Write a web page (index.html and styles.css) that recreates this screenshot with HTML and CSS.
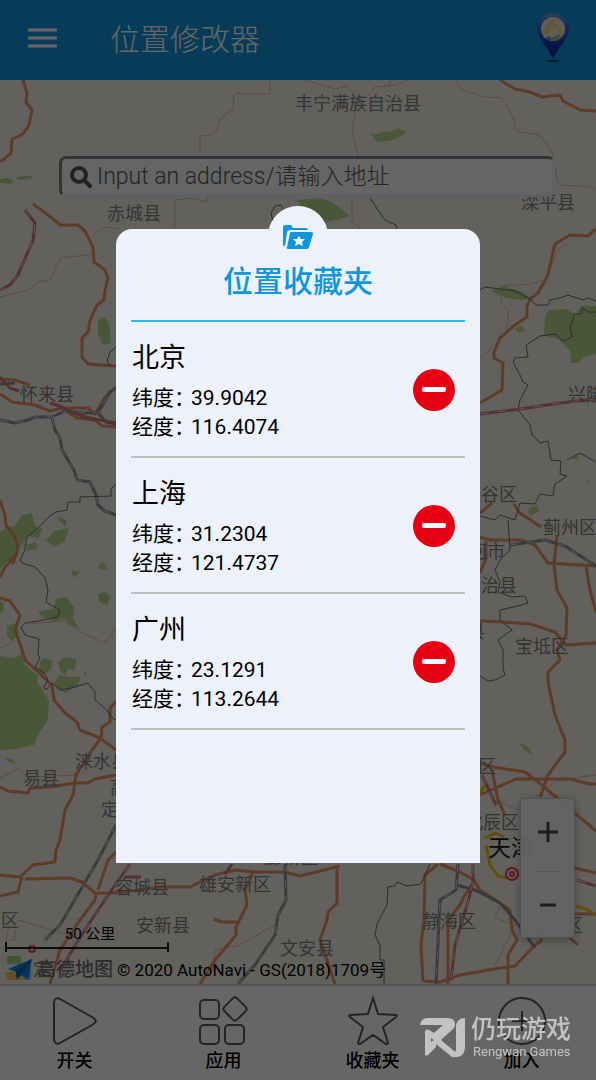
FILE: index.html
```html
<!DOCTYPE html>
<html lang="zh-CN">
<head>
    <meta charset="UTF-8">
    <meta name="viewport" content="width=device-width, initial-scale=1.0">
    <title>位置修改器</title>
    <link rel="stylesheet" href="styles.css">
</head>
<body>
    <header class="topbar">
        <button class="menu-btn" type="button" aria-label="菜单">
            <svg width="30" height="22" viewBox="0 0 30 22"><path d="M0 3h29M0 11h29M0 19h29" stroke="#fff" stroke-width="3"/></svg>
        </button>
        <h1>位置修改器</h1>
        <button class="pin-btn" type="button" aria-label="定位">
            <svg width="34" height="52" viewBox="0 0 34 52">
                <defs>
                    <linearGradient id="pin" x1="0" y1="0" x2="0" y2="1">
                        <stop offset="0" stop-color="#6ea0e6"/>
                        <stop offset=".35" stop-color="#325fd7"/>
                        <stop offset="1" stop-color="#1414a0"/>
                    </linearGradient>
                </defs>
                <ellipse cx="17" cy="49" rx="7" ry="1.5" fill="#08466e"/>
                <path d="M17 1C8 1 1 8 1 16c0 9 9 18 16 30 7-12 16-21 16-30C33 8 26 1 17 1z" fill="url(#pin)"/>
                <circle cx="17" cy="17" r="12" fill="#f0ebd7"/>
                <path d="M7 19l13-12M15 8l12 14M8 22l10-8" stroke="#f0dc8c" stroke-width="3"/>
                <path d="M15 26l8-4 3 2c-3 4-7 5-9 5z" fill="#a0c88c"/>
                <path d="M10 26l3-2 3 4-2 1z" fill="#3c96e6"/>
            </svg>
        </button>
    </header>

    <main class="map">
        <svg class="map-canvas" viewBox="0 80 596 904" preserveAspectRatio="xMidYMid slice">
            <!-- woods and parks -->
            <g class="green">
                <path d="M0 179l8-1 6 3-3 3-11-1zM16 178l6-2h11l-3 3-11 1zM370 133l7 1 8-3 5 1 8-4 9 4-8 5-10 4-12 1z"/>
                <path d="M297 200l21-2 12 3 7 5 13 10-10 3-13 3-18-3zM98 320l6-3 5 6 2 20-8 2-5-10z"/>
                <path d="M0 531l14-5 8-11 10-2 3 13 8 3-5 9-10-2-6 8-7 10-15 15zM58 516l8 4v7l-8-8zM46 541l8-10 15-3-4 13-11 6z"/>
                <path d="M26 545l10-3 1 7-10 2zM48 540h17l-8 4zM71 570l9 2-6 6zM98 566l5-5 5 9-9-1zM98 594l8-2 5 5-4 8-8-3z"/>
                <path d="M38 612l15-3 3-10 10-2 8 10-1 12 6 9-10-2-4-8-12 3-10-4zM7 626l9-3 3 10-6 8-6-4zM0 600l4 4-1 8-3 1z"/>
                <path d="M0 656l14 2 7-4 4 11 7 6 6 4-1 8 4 4 3 6 5 7-1 20-10 15-4 10-18 4-16 1z"/>
                <path d="M40 662l4-4 8 2-1 10-8 5-4-5zM58 662l8-5 11 2-3 12-6-3-2 8-6-6zM54 683l6-8 8 2 12 0-2 8-12 8-9-3zM83 673l4-1-2 5z"/>
                <path d="M5 758l8 1 3 5-8-2zM491 291l12-5 18 5 11 8-11 1-15-2zM515 329l5-4 6 5-7 3z"/>
                <path d="M545 316l4-6 17-1 10 6 5-9 15 0v48l-11 3-7 6-7 0-1-12-8-9-7-4-11-2z"/>
                <path d="M571 458l6-4 2 7zM528 509l9-4 2 6-9 5zM586 480l4 1-2 3zM519 743l10 4 4 8-8-4z"/>
            </g>
            <!-- county roads -->
            <g class="lane">
                <path d="M270 80v14h-31v-2l-5 3-1 14-13 10-3 11-5 5-12 1v21M207 197v5l-15-4-17 2v29M95 233l10-6 15 2"/>
                <path d="M0 297l28-7 10-8 12-2 10-22 35-4M305 80l30 9 12-3 3 4 8 8-6 32 7 30M366 98l9-11 20-2 13-5M390 80v6"/>
                <path d="M455 80l8 10 22 7 16 1 11 17 6 17 20 2 7 8 7 11 6 30 2 2 30 2 6 4M352 200v20l8 9M481 358l12-12M501 286l30-2 15-5 10-25 8-10M501 290v13l8 8-3 20"/>
                <path d="M30 624l40-4 12 13 23 10 11-15M0 648l15-7M0 778l18-9 10 8 50-2M18 920l30 9 26 8M9 926l-3 14h9v-10M213 970l2-20 25-5 35-20M496 800l22 10 40-30 38-5M495 965l20-40-20-7 5-12"/>
            </g>
            <!-- expressways -->
            <g class="road">
                <path d="M23 80l4 13-1 9 6 8-3 15-6 9-11 5-1 14-8 7-3 1M33 204l19 14 8 7h18l7 6 8 16 1 15 11 8 3 8-3 12-1 10-7 5-7 15-2 12-6 6v19l6 7 28 2"/>
                <path d="M0 379l15 1 15 5M0 394l12 8 23 3 15 6 12-3h26l7 6 10-17 11-10M62 408l15 10 18 2 7 6 14 1M0 500l5 15 1 10 9 12 3 13-6 10-7 7-5 10M18 550l-5 13-4-5"/>
                <path d="M0 598l10 3 10 14-5 15 7 20 3 10 13 12 14 13 2 15 11 13 12 9 3 8 20 8 16 12M116 702l-6 6v14l-8 5-1 11-9 12-16 25-3 20-8 15-5 30-4 10-1 12-22 3-13 12-22-2M22 877l-4 15-18 4M25 879l45-1 12 4 13 11h21l45-6 29 0 10-5 15-7 20-5 20 2h30l15 4 40-10"/>
                <path d="M96 893l-1 7-15 20-20 30-10 34M116 852l-8 8-10 30M0 787l8 4 20 2 2-5 20-1 25-4h13l7-4 21-4M253 872l-8 18 2 15-11 22v8l-21 25-15 24M214 919l8 3h18M337 868v35l-9 9-1 8-7 20 7 20 8 24"/>
                <path d="M438 864l-13 11-1 45-3 25 2 36 17 1 20-7 40-7 15-2 20-21 6-4v-16M440 864l20 8 14 8 6 10 20 13 10 7 2 20 5 10-9 15v29M474 882l-9 13-5 10-12 15v64"/>
                <path d="M500 80l15 9 15 3 12 5 18-2 3 6 17 9 16 1M596 229l-8 7-18-1-15 9-5 21-2 10-10 18-8 6-3 7v11l-12 8-15 13-6 14v6l9 5-1 27-22 13"/>
                <path d="M480 513l12-10M514 504l6 9 21 14M480 537l10 3h30l15 5 13 18 48 3M557 535l-3 30 3 25 10 18-1 27-9 15 3 10-12 12v10l7 33 10 25v12l-17 23-8 22M480 621l25 1 25 2 25 8 11 13 30-2M586 566l4 24 6 22"/>
                <path d="M480 795l36-16h54l20 5h6M480 763l13 4 32 5 18 14 53 45M492 770l6 30 7 15M575 868l21 5M575 914h21M570 938l8 7M486 541v17l-6 15"/>
            </g>
            <!-- railways and high-speed lines -->
            <g class="rail">
                <path d="M0 384l15-1M0 420l15 3 13-3 7-3h17l13-6 20 2h13l12-21 6-4M52 418l3 12 5 8 2 12 12 20 3 10 13 2 6 13 2 10 7 6 11 4M98 413l8 9 10 2"/>
                <path d="M116 825l-18 35-38 65-15 15M285 864l1 36-8 15-3 20-20 30-17 19M458 864l-2 26-16 10-4 84M456 885l19 5 25 13 15 17 20 28M510 545l35-5 20 6 31 20"/>
            </g>
            <g class="rail-dash">
                <path d="M0 420l15 3 13-3 7-3h17l13-6 20 2h13l12-21 6-4M52 418l3 12 5 8 2 12 12 20 3 10 13 2 6 13 2 10 7 6 11 4"/>
                <path d="M116 825l-18 35-38 65-15 15M285 864l1 36-8 15-3 20-20 30-17 19M458 864l-2 26-16 10-4 84M510 545l35-5 20 6 31 20"/>
            </g>
            <g class="fast">
                <path d="M25 210l10 13-2 17-15 35-8 10-10 5M0 377l10 11 9 3M50 403l10 3 12 6 13 5 31 6M130 864l-15 21-27 40-28 45M124 877h17M480 414l40-5 40-6 36-4M473 864v19l-6 22-12 40-4 35M232 864l-7 10M482 775l14 30M577 880l19 6"/>
            </g>
            <g class="fast-dash">
                <path d="M25 210l10 13-2 17-15 35-8 10-10 5M130 864l-15 21-27 40-28 45M480 414l40-5 40-6 36-4M473 864v19l-6 22-12 40-4 35M482 775l14 30M577 880l19 6"/>
            </g>
            <!-- district borders -->
            <g class="border">
                <path d="M116 484l-5 5v7l-31 1v5H68l-1 8-11 2-6 4-12 12-11 9-2 9 0 4-5 10 2 3 13 4 10 11 3 12-2 12 14 8-3 7-19 4-13 2-4 4 4 8 14 4-1 16 2 3-5 9 10 7 3 6-4 7 2 3 6-7 10 7 13-3 13-4 7 9v8l12 10 5 8 4 2M116 347l-6 5-3 9 3 5"/>
                <path d="M273 222l-2-9 4-7 6-1 2 4M370 198l10 15 5 7 11 5 1 4M480 290l5-3 30 4 15 8 6 6h12l2-5 10-2 8-3 15 5 5-2 8 3M596 312h-8l-6-4v6h-8l-1 6-3 7 2 10-9 4-8-7-15 2-14 9 2 12-13 1-2 4 7 13 3 7 5 3-8 15-2 10 12 15 2 10 8 8 8-2 3 19 10 1-1 13 7 2-12 8-2 12-13-2-5 10-15-1-5 17-15-5-5 5-15-4M596 462l-16-9-13 7M508 520l2 30-10 10-5 10 5 12-2 10 14 5 13-1 3 7-10 3-18 4v10l12 10-14 10 5 10v18l2 7-10 5-7 1-8-5"/>
                <path d="M430 864l-9 20-14 2-10-4-2 4-7 1-1 18-10 19-2 11 5 10v15h4v24"/>
            </g>
            <g class="subway">
                <path d="M485 785l-6 10M486 845l4 20 8 11 8 2M484 838l12-5 8 4M576 906l10 3 10 6"/>
            </g>
            <g class="capital">
                <circle cx="512" cy="874" r="6"/>
                <circle cx="512" cy="874" r="2"/>
                <circle cx="32" cy="949" r="3"/>
            </g>
            <g class="place">
                <text x="295" y="110">丰宁满族自治县</text>
                <text x="107" y="220">赤城县</text>
                <text x="521" y="209">滦平县</text>
                <text x="20" y="401">怀来县</text>
                <text x="568" y="401">兴隆县</text>
                <text x="481" y="501">谷区</text>
                <text x="543" y="534">蓟州区</text>
                <text x="469" y="558">河市</text>
                <text x="481" y="592">治县</text>
                <text x="467" y="638">县</text>
                <text x="515" y="653">宝坻区</text>
                <text x="478" y="773">区</text>
                <text x="465" y="829">北辰区</text>
                <text x="75" y="768">涞水县</text>
                <text x="23" y="785">易县</text>
                <text x="110" y="794">高</text>
                <text x="101" y="816">定</text>
                <text x="115" y="894">容城县</text>
                <text x="199" y="891">雄安新区</text>
                <text x="264" y="864">廊新区</text>
                <text x="136" y="932">安新县</text>
                <text x="280" y="955">文安县</text>
                <text x="422" y="928">静海区</text>
                <text x="1" y="927">区</text>
                <text x="565" y="932">区</text>
                <text x="33" y="976">定</text>
                <text class="city" x="488" y="856">天津</text>
            </g>
        </svg>

        <form class="search">
            <svg width="22" height="22" viewBox="0 0 22 22"><circle cx="9" cy="9" r="7" fill="none" stroke="#555" stroke-width="4"/><path d="M14 14l6 6" stroke="#555" stroke-width="4" stroke-linecap="round"/></svg>
            <input type="text" aria-label="地址" placeholder="Input an address/请输入地址">
        </form>

        <div class="zoom">
            <button type="button" aria-label="放大"><svg width="20" height="22" viewBox="0 0 20 22"><path d="M10 1v20M0 11h20" stroke="#444" stroke-width="3"/></svg></button>
            <button type="button" aria-label="缩小"><svg width="20" height="22" viewBox="0 0 20 22"><path d="M2 11h16" stroke="#444" stroke-width="3"/></svg></button>
        </div>

        <div class="map-info">
            <div class="scale">50 公里</div>
            <div class="copyright">
                <svg width="28" height="28" viewBox="0 0 28 28">
                    <path d="M2 2h14v8H2z" fill="#a5d782"/><path d="M0 18h20v8H2z" fill="#f5c85a"/><path d="M14 14h12v12h-6z" fill="#8cbef5"/>
                    <path d="M3 15L27 5l-4 20-7-4-4 4-1-7z" fill="#0a82e6"/><path d="M27 5L11 18l1 7 4-4z" fill="#0564b4"/>
                </svg>
                <span class="amap">高德地图</span>
                <span>© 2020 AutoNavi - GS(2018)1709号</span>
            </div>
        </div>
    </main>

    <nav class="tabs">
        <button type="button">
            <svg width="50" height="50" viewBox="0 0 50 50"><path d="M4 7c0-4 3-6 6-4l32 18c5 3 5 5 0 8L10 47c-3 2-6 0-6-4z"/></svg>
            开关
        </button>
        <button type="button">
            <svg width="50" height="50" viewBox="0 0 50 50"><rect x="1" y="4" width="19" height="19" rx="4"/><rect x="1" y="29" width="19" height="19" rx="4"/><rect x="26" y="29" width="19" height="19" rx="4"/><rect x="27" y="4" width="18" height="18" rx="3" transform="rotate(45 36 13)"/></svg>
            应用
        </button>
        <button type="button">
            <svg width="50" height="50" viewBox="0 0 50 50"><path d="M25 2l5 16 18 1c1 0 1 1 0 2L35 31l5 16c0 1-1 1-2 1L25 39l-13 9c-1 0-2 0-2-1l5-16L2 21c-1-1-1-2 0-2l18-1z"/></svg>
            收藏夹
        </button>
        <button type="button">
            <svg width="50" height="50" viewBox="0 0 50 50"><circle cx="25" cy="25" r="23"/><path d="M25 15v20M15 25h20"/></svg>
            加入
        </button>
    </nav>

    <div class="backdrop">
        <section class="favorites" role="dialog" aria-labelledby="fav-title">
            <div class="badge">
                <svg width="30" height="24" viewBox="0 0 30 24">
                    <path d="M0 2c0-1 1-2 2-2h6l2 3h13c1 0 2 1 2 2H8c-3 0-4 1-4 3L2 21H1c-1 0-1-1-1-2z"/>
                    <path d="M8 7h20c2 0 2 1 2 2l-4 13c0 1-1 2-2 2H5c-1 0-2-1-1-2L7 8c0-1 1-1 1-1z"/>
                    <path class="star" d="M16 11l2 3 4 0-3 3 1 4-4-2-4 2 1-4-3-3 4 0z"/>
                </svg>
            </div>
            <h2 id="fav-title">位置收藏夹</h2>
            <ul>
                <li>
                    <div>
                        <h3>北京</h3>
                        <dl><dt>纬度：</dt><dd>39.9042</dd><dt>经度：</dt><dd>116.4074</dd></dl>
                    </div>
                    <button type="button" aria-label="删除北京"></button>
                </li>
                <li>
                    <div>
                        <h3>上海</h3>
                        <dl><dt>纬度：</dt><dd>31.2304</dd><dt>经度：</dt><dd>121.4737</dd></dl>
                    </div>
                    <button type="button" aria-label="删除上海"></button>
                </li>
                <li>
                    <div>
                        <h3>广州</h3>
                        <dl><dt>纬度：</dt><dd>23.1291</dd><dt>经度：</dt><dd>113.2644</dd></dl>
                    </div>
                    <button type="button" aria-label="删除广州"></button>
                </li>
            </ul>
        </section>
    </div>

    <div class="brand">
        <svg width="46" height="40" viewBox="0 0 46 40">
            <path fill-rule="evenodd" d="M0 7Q1 0 8 0H28Q36 1 35 7 35 9 33 11L21 22 34 33Q36 35 36 31V8Q37 0 45 0V30Q44 39 36 39H32L16 26V29L8 37Q5 39 5 36V15Q5 10 9 12L14 15 23 7zM11 20v4l3-2z"/>
        </svg>
        <div>
            <strong>仍玩游戏</strong>
            <span>Rengwan Games</span>
        </div>
    </div>
</body>
</html>
```

FILE: styles.css
```css
* {
    box-sizing: border-box;
}
body {
    margin: 0;
    min-height: 100vh;
    display: flex;
    flex-direction: column;
    font-family: Roboto, "Noto Sans CJK SC", sans-serif;
    color: #000;
    background-color: #fff;
}
button {
    padding: 0;
    border: 0;
    background: none;
    font-family: inherit;
    color: inherit;
}
svg {
    display: block;
}

/* top bar */
.topbar {
    display: flex;
    align-items: center;
    height: 80px;
    padding: 0 26px 5px 28px;
    background-color: #1096dc;
}
.topbar h1 {
    flex: 1;
    margin: 0 0 0 52px;
    padding-top: 4px;
    font-size: 30px;
    font-weight: 300;
    line-height: 40px;
    color: #fff;
}

/* map */
.map {
    position: relative;
    flex: 1;
    display: flex;
    flex-direction: column;
    justify-content: space-between;
    overflow: hidden;
    background-color: #f8f3e8;
}
.map-canvas {
    position: absolute;
    inset: 0;
    width: 100%;
    height: 100%;
    fill: none;
    stroke-linejoin: round;
}
.green {
    fill: #b9d78c;
}
.lane {
    stroke: #e1bea0;
    stroke-width: 1;
}
.road {
    stroke: #e69664;
    stroke-width: 3;
}
.rail {
    stroke: #8c9196;
    stroke-width: 3;
}
.rail-dash {
    stroke: #dcdcdc;
    stroke-width: 1;
    stroke-dasharray: 8 8;
}
.fast {
    stroke: #d2787d;
    stroke-width: 3;
}
.fast-dash {
    stroke: #f5dcdc;
    stroke-width: 1;
    stroke-dasharray: 9 9;
}
.border {
    stroke: #6e6e73;
    stroke-width: 1;
}
.subway {
    stroke: #f0c81e;
    stroke-width: 3;
}
.capital {
    stroke: #eb3c46;
    stroke-width: 2;
}
.place {
    font-size: 18px;
    fill: #828282;
    stroke: none;
}
.place .city {
    font-size: 23px;
    fill: #141414;
}

.search {
    position: relative;
    display: flex;
    align-items: center;
    gap: 5px;
    height: 41px;
    margin: 76px 41px 0 59px;
    padding: 0 8px;
    border: 3px solid;
    border-color: #828282 #f0f0f5 #f0f0f5 #828282;
    border-radius: 7px;
    background-color: #fcfcfc;
}
.search input {
    flex: 1;
    min-width: 0;
    padding: 0;
    border: 0;
    outline: 0;
    background: none;
    font-family: inherit;
    font-size: 23px;
    font-weight: 300;
    line-height: 32px;
}
.search input::placeholder {
    color: #5a5a5a;
}

.zoom {
    position: absolute;
    right: 21px;
    bottom: 46px;
    width: 55px;
    padding: 0 12px;
    border: 1px solid #c8c8c8;
    border-radius: 4px;
    background-color: rgba(248, 248, 248, 0.95);
    box-shadow: 0 2px 8px rgba(0, 0, 0, 0.3);
}
.zoom button {
    display: flex;
    align-items: center;
    justify-content: center;
    width: 100%;
    height: 66px;
}
.zoom button + button {
    margin-top: 6px;
    border-top: 1px solid #dcdcdc;
}

.map-info {
    position: relative;
    padding: 0 5px;
}
.scale {
    width: 164px;
    height: 30px;
    padding-left: 6px;
    font-size: 15px;
    line-height: 24px;
    text-align: center;
    background:
        linear-gradient(#222, #222) 0 100% / 2px 10px no-repeat,
        linear-gradient(#222, #222) 100% 100% / 2px 10px no-repeat,
        linear-gradient(#222, #222) 0 25px / 100% 2px no-repeat;
}
.copyright {
    display: flex;
    align-items: center;
    height: 32px;
    font-size: 17px;
}
.copyright .amap {
    margin: 0 4px 2px;
    font-size: 19px;
    font-weight: 500;
    color: #6e6e6e;
}

/* bottom tabs */
.tabs {
    display: grid;
    grid-template-columns: repeat(4, 1fr);
    height: 96px;
    border-top: 2px solid #d2d2d2;
}
.tabs button {
    display: flex;
    flex-direction: column;
    align-items: center;
    gap: 3px;
    padding-top: 10px;
    font-size: 18px;
    font-weight: 500;
    line-height: 24px;
}
.tabs svg {
    fill: none;
    stroke: #5a5a5a;
    stroke-width: 2;
}

/* favorites dialog */
.backdrop {
    position: fixed;
    inset: 0;
    display: flex;
    padding: 229px 116px 217px;
    background-color: rgba(0, 0, 0, 0.6);
}
.favorites {
    position: relative;
    flex: 1;
    padding: 33px 15px 0;
    border-radius: 16px 16px 0 0;
    background-color: #edf2fa;
}
.badge {
    position: absolute;
    top: -23px;
    left: 50%;
    width: 60px;
    height: 60px;
    margin-left: -30px;
    padding: 19px 15px;
    border-radius: 50%;
    background-color: #edf2fa;
}
.badge svg {
    fill: #1296db;
}
.badge .star {
    fill: #edf2fa;
}
.favorites h2 {
    margin: 0;
    padding-bottom: 18px;
    border-bottom: 2px solid #1ebef0;
    font-size: 30px;
    font-weight: 500;
    line-height: 40px;
    text-align: center;
    color: #1296db;
}
.favorites ul {
    margin: 0;
    padding: 0;
    list-style: none;
}
.favorites li {
    display: flex;
    align-items: center;
    justify-content: space-between;
    padding: 15px 10px 14px 1px;
    border-bottom: 2px solid #bebebe;
}
.favorites h3 {
    margin: 2px 0 7px;
    font-size: 27px;
    font-weight: 400;
    line-height: 38px;
}
.favorites dl {
    display: grid;
    grid-template-columns: 59px auto;
    margin: 0;
    font-size: 21px;
    line-height: 29px;
}
.favorites dt {
    white-space: nowrap;
}
.favorites dd {
    margin: 0;
}
.favorites li button {
    display: flex;
    align-items: center;
    justify-content: center;
    width: 42px;
    height: 42px;
    border-radius: 50%;
    background-color: #e60012;
}
.favorites li button::before {
    content: "";
    width: 24px;
    height: 5px;
    border-radius: 2px;
    background-color: #fff;
}

/* corner brand */
.brand {
    position: fixed;
    right: 25px;
    bottom: 20px;
    display: flex;
    align-items: center;
    gap: 5px;
    color: #c3c3c3;
}
.brand svg {
    fill: #c3c3c3;
}
.brand strong,
.brand span {
    display: block;
}
.brand strong {
    font-size: 25px;
    font-weight: 500;
    line-height: 28px;
}
.brand span {
    padding-left: 2px;
    font-size: 13px;
    line-height: 16px;
}
```
